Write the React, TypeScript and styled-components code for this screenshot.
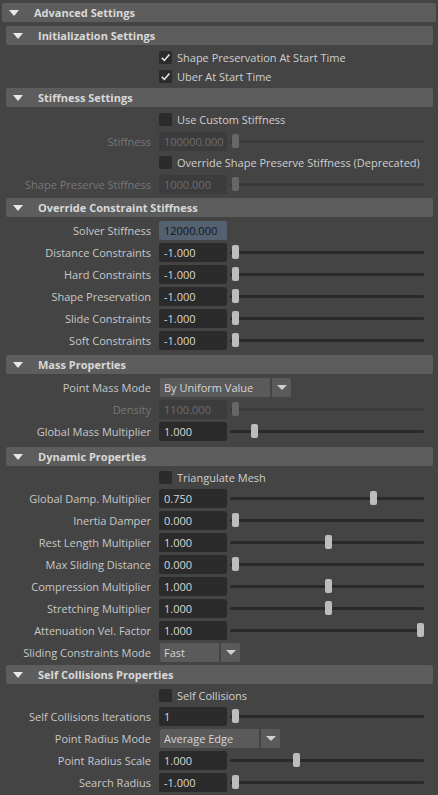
import React from "react";
import styled, { createGlobalStyle } from "styled-components";

const Global = createGlobalStyle`
  html, body { margin: 0; padding: 0; background: #444444; }
  body { font-family: "Open Sans", "Noto Sans", sans-serif; font-size: 11px; }
  * { box-sizing: border-box; }
`;

const Panel = styled.div`
  width: 438px;
  height: 795px;
  overflow: hidden;
  background: #444444;
  padding: 3px 2px 0 2px;
`;

const Header = styled.div`
  height: 19px;
  display: flex;
  align-items: center;
  background: #5d5d5d;
  border-radius: 2px;
  color: #d9d9d9;
  font-weight: 700;
  padding-left: 7px;
  gap: 15px;
  flex-shrink: 0;
`;

const Arrow = styled.span`
  width: 0;
  height: 0;
  border-left: 5.5px solid transparent;
  border-right: 5.5px solid transparent;
  border-top: 6px solid #e8e8e8;
`;

const OuterBody = styled.div`
  margin: 4px 3px 0 4px;
  display: flex;
  flex-direction: column;
  gap: 2px;
`;

const Section = styled.div`
  display: flex;
  flex-direction: column;
`;

const Body = styled.div<{ $pt: number; $pb: number }>`
  display: flex;
  flex-direction: column;
  gap: 2px;
  padding: ${(p) => p.$pt}px 0 ${(p) => p.$pb}px 0;
`;

const Row = styled.div<{ $h: number }>`
  display: grid;
  grid-template-columns: 145px 1fr;
  column-gap: 8px;
  height: ${(p) => p.$h}px;
  align-items: center;
`;

const Label = styled.div<{ $off?: boolean }>`
  text-align: right;
  white-space: nowrap;
  color: ${(p) => (p.$off ? "#777777" : "#c8c8c8")};
`;

const Controls = styled.div`
  display: flex;
  align-items: center;
  min-width: 0;
`;

const Field = styled.div<{ $off?: boolean; $active?: boolean }>`
  width: 68px;
  height: 19px;
  flex-shrink: 0;
  display: flex;
  align-items: center;
  padding-left: 5px;
  border-radius: 2px;
  background: ${(p) => (p.$active ? "#536170" : p.$off ? "#3c3c3c" : "#2b2b2b")};
  color: ${(p) => (p.$off ? "#6c6c6c" : p.$active ? "#161616" : "#d8d8d8")};
`;

const Slider = styled.div`
  position: relative;
  flex: 1;
  height: 14px;
  margin: 0 9px 0 3px;
  display: flex;
  align-items: center;
`;

const Track = styled.div<{ $off?: boolean }>`
  width: 100%;
  height: 3px;
  border-radius: 2px;
  background: ${(p) => (p.$off ? "#3a3a3a" : "#2a2a2a")};
`;

const Thumb = styled.div<{ $off?: boolean }>`
  position: absolute;
  top: 0;
  width: 7px;
  height: 14px;
  border-radius: 2px;
  background: ${(p) => (p.$off ? "#676767" : "#bdbdbd")};
`;

const Box = styled.div`
  width: 13px;
  height: 13px;
  border-radius: 2px;
  background: #2b2b2b;
  display: flex;
  align-items: center;
  justify-content: center;
  flex-shrink: 0;
`;

const CheckText = styled.span`
  margin-left: 5px;
  color: #cfcfcf;
  white-space: nowrap;
`;

const Drop = styled.div<{ $w: number }>`
  width: ${(p) => p.$w}px;
  height: 19px;
  margin-left: 1px;
  display: flex;
  align-items: stretch;
  border-radius: 2px;
  overflow: hidden;
  background: #444444;
  gap: 2px;
  flex-shrink: 0;
`;

const DropText = styled.div`
  flex: 1;
  background: #5a5a5a;
  color: #d6d6d6;
  display: flex;
  align-items: center;
  padding-left: 4px;
`;

const DropBtn = styled.div`
  width: 19px;
  background: #5a5a5a;
  display: flex;
  align-items: center;
  justify-content: center;
`;

const SmallArrow = styled.span`
  width: 0;
  height: 0;
  border-left: 5px solid transparent;
  border-right: 5px solid transparent;
  border-top: 5px solid #d0d0d0;
`;

type Item =
  | { k: "check"; label: string; on?: boolean; h?: number }
  | { k: "num"; label: string; value: string; pct?: number; off?: boolean; active?: boolean; noSlider?: boolean }
  | { k: "drop"; label: string; value: string; w: number };

const sections: { title: string; pt: number; pb: number; items: Item[] }[] = [
  {
    title: "Initialization Settings",
    pt: 4,
    pb: 1,
    items: [
      { k: "check", label: "Shape Preservation At Start Time", on: true, h: 17 },
      { k: "check", label: "Uber At Start Time", on: true, h: 17 },
    ],
  },
  {
    title: "Stiffness Settings",
    pt: 3,
    pb: 2,
    items: [
      { k: "check", label: "Use Custom Stiffness" },
      { k: "num", label: "Stiffness", value: "100000.000", pct: 0, off: true },
      { k: "check", label: "Override Shape Preserve Stiffness (Deprecated)" },
      { k: "num", label: "Shape Preserve Stiffness", value: "1000.000", pct: 0, off: true },
    ],
  },
  {
    title: "Override Constraint Stiffness",
    pt: 3,
    pb: 3,
    items: [
      { k: "num", label: "Solver Stiffness", value: "12000.000", active: true, noSlider: true },
      { k: "num", label: "Distance Constraints", value: "-1.000", pct: 0 },
      { k: "num", label: "Hard Constraints", value: "-1.000", pct: 0 },
      { k: "num", label: "Shape Preservation", value: "-1.000", pct: 0 },
      { k: "num", label: "Slide Constraints", value: "-1.000", pct: 0 },
      { k: "num", label: "Soft Constraints", value: "-1.000", pct: 0 },
    ],
  },
  {
    title: "Mass Properties",
    pt: 3,
    pb: 4,
    items: [
      { k: "drop", label: "Point Mass Mode", value: "By Uniform Value", w: 131 },
      { k: "num", label: "Density", value: "1100.000", pct: 0, off: true },
      { k: "num", label: "Global Mass Multiplier", value: "1.000", pct: 0.1 },
    ],
  },
  {
    title: "Dynamic Properties",
    pt: 3,
    pb: 1,
    items: [
      { k: "check", label: "Triangulate Mesh", h: 17 },
      { k: "num", label: "Global Damp. Multiplier", value: "0.750", pct: 0.745 },
      { k: "num", label: "Inertia Damper", value: "0.000", pct: 0 },
      { k: "num", label: "Rest Length Multiplier", value: "1.000", pct: 0.5 },
      { k: "num", label: "Max Sliding Distance", value: "0.000", pct: 0 },
      { k: "num", label: "Compression Multiplier", value: "1.000", pct: 0.5 },
      { k: "num", label: "Stretching Multiplier", value: "1.000", pct: 0.5 },
      { k: "num", label: "Attenuation Vel. Factor", value: "1.000", pct: 1 },
      { k: "drop", label: "Sliding Constraints Mode", value: "Fast", w: 80 },
    ],
  },
  {
    title: "Self Collisions Properties",
    pt: 3,
    pb: 3,
    items: [
      { k: "check", label: "Self Collisions", h: 17 },
      { k: "num", label: "Self Collisions Iterations", value: "1", pct: 0 },
      { k: "drop", label: "Point Radius Mode", value: "Average Edge", w: 120 },
      { k: "num", label: "Point Radius Scale", value: "1.000", pct: 0.33 },
      { k: "num", label: "Search Radius", value: "-1.000", pct: 0 },
    ],
  },
];

const Check = () => (
  <svg width="11" height="11" viewBox="0 0 11 11">
    <path d="M1.8 5.8 L4.3 8.4 L9.4 2.4" fill="none" stroke="#e6e6e6" strokeWidth="1.6" />
  </svg>
);

function renderItem(it: Item, i: number) {
  if (it.k === "check") {
    return (
      <Row key={i} $h={it.h ?? 19}>
        <span />
        <Controls>
          <Box>{it.on && <Check />}</Box>
          <CheckText>{it.label}</CheckText>
        </Controls>
      </Row>
    );
  }
  if (it.k === "drop") {
    return (
      <Row key={i} $h={20}>
        <Label>{it.label}</Label>
        <Controls>
          <Drop $w={it.w}>
            <DropText>{it.value}</DropText>
            <DropBtn>
              <SmallArrow />
            </DropBtn>
          </Drop>
        </Controls>
      </Row>
    );
  }
  return (
    <Row key={i} $h={20}>
      <Label $off={it.off}>{it.label}</Label>
      <Controls>
        <Field $off={it.off} $active={it.active}>
          {it.value}
        </Field>
        {!it.noSlider && (
          <Slider>
            <Track $off={it.off} />
            <Thumb $off={it.off} style={{ left: `calc(2px + (100% - 9px) * ${it.pct ?? 0})` }} />
          </Slider>
        )}
      </Controls>
    </Row>
  );
}

export default function App() {
  return (
    <>
      <Global />
      <Panel>
        <Section>
          <Header>
            <Arrow />
            Advanced Settings
          </Header>
          <OuterBody>
            {sections.map((s) => (
              <Section key={s.title}>
                <Header>
                  <Arrow />
                  {s.title}
                </Header>
                <Body $pt={s.pt} $pb={s.pb}>
                  {s.items.map(renderItem)}
                </Body>
              </Section>
            ))}
          </OuterBody>
        </Section>
      </Panel>
    </>
  );
}
